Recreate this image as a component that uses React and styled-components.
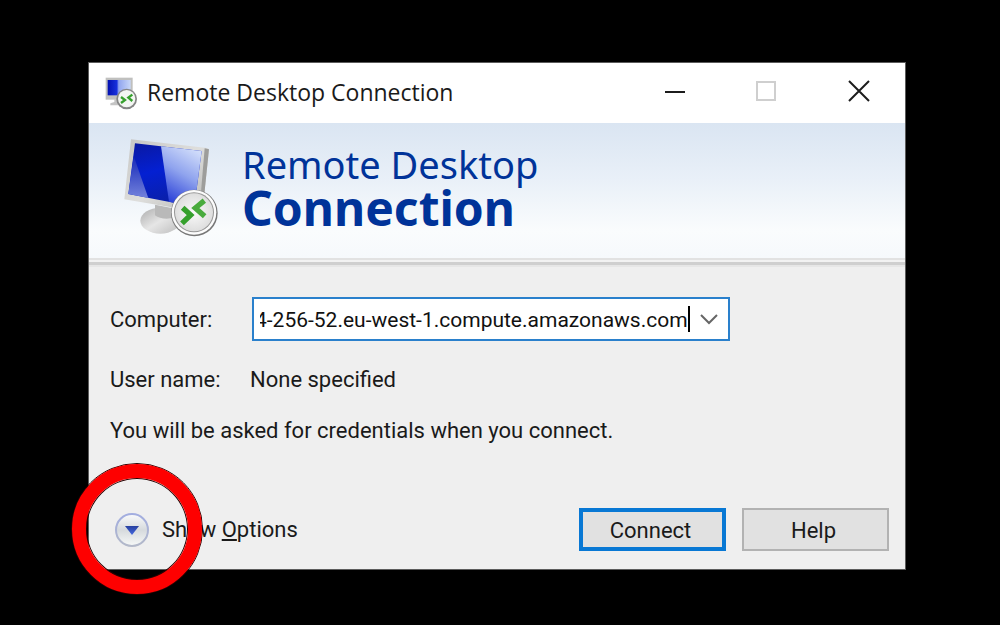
import React, { useLayoutEffect, useRef } from "react";
import styled, { createGlobalStyle } from "styled-components";

const GlobalStyle = createGlobalStyle`
  *, *::before, *::after { box-sizing: border-box; }
  body { margin: 0; background: #000; }
`;

const Desktop = styled.main`
  min-height: 100vh;
  padding: 62px 94px 56px 88px;
  background: #000;
  color: #1a1a1a;
  font-family: Roboto, "Liberation Sans", sans-serif;
  font-size: 22px;
  line-height: 28px;
`;

const Dialog = styled.section`
  border: 1px solid #5c5c5c;
  background: #efefef;
`;

const TitleBar = styled.header`
  display: flex;
  align-items: center;
  height: 60px;
  padding-left: 16px;
  background: #fff;
`;

const Title = styled.h1`
  flex: 1;
  margin: 0 0 0 10px;
  padding-bottom: 2px;
  font: 400 23px/32px "Open Sans", "Noto Sans", sans-serif;
  white-space: nowrap;
`;

const CaptionButton = styled.button`
  display: flex;
  align-items: center;
  justify-content: center;
  width: 92px;
  height: 60px;
  padding: 0 0 4px;
  border: 0;
  background: transparent;
  color: ${(p) => (p.disabled ? "#cfcfcf" : "#1c1c1c")};
`;

const Banner = styled.div`
  display: flex;
  align-items: flex-start;
  height: 135px;
  padding: 15px 34px 0;
  background: linear-gradient(#dae5f2, #e9f0f8 42%, #fafcfd 80%, #f6f9fc);
`;

const BannerText = styled.div`
  margin-left: 23px;
  color: #003399;
  font-family: "Noto Sans", "Open Sans", sans-serif;
  white-space: nowrap;
`;

const Product = styled.div`
  font-size: 38px;
  line-height: 44px;
  padding-top: 4px;
`;

const ProductBold = styled.div`
  font-size: 48px;
  font-weight: 700;
  line-height: 44px;
`;

const Divider = styled.div`
  height: 9px;
  background: linear-gradient(#e2e2e2 0 2px, #f2f2f2 2px 4px, #cfcfcf 4px 7px, #e6e6e6 7px 9px);
`;

const Form = styled.form`
  padding: 30px 16px 18px 21px;
`;

const Row = styled.div`
  display: grid;
  grid-template-columns: 142px minmax(0, 1fr);
  align-items: center;
  margin-bottom: 23px;
`;

const Label = styled.label`
  padding-top: 2px;
`;

const Value = styled.output`
  margin-left: -2px;
  padding-top: 2px;
`;

const ComboBox = styled.div`
  display: flex;
  align-items: center;
  width: 100%;
  max-width: 478px;
  height: 44px;
  padding-left: 6px;
  border: 2px solid #2a80cc;
  background: #fff;
`;

const HostInput = styled.input`
  flex: 1;
  min-width: 0;
  height: 36px;
  padding: 2px 0 0;
  border: 0;
  outline: 0;
  background: transparent;
  color: #111;
  caret-color: transparent;
  font: inherit;
  font-size: 21px;
`;

const Caret = styled.span`
  width: 2px;
  height: 26px;
  background: #000;
`;

const DropButton = styled.button`
  display: flex;
  align-items: center;
  justify-content: center;
  width: 38px;
  height: 40px;
  padding: 0;
  border: 0;
  background: transparent;
`;

const Message = styled.p`
  margin: 0;
`;

const Footer = styled.div`
  display: flex;
  align-items: center;
  gap: 16px;
  margin-top: 63px;
`;

const OptionsArea = styled.div`
  position: relative;
  margin-right: auto;
`;

const OptionsButton = styled.button`
  display: flex;
  align-items: center;
  gap: 12px;
  padding: 0 0 0 4px;
  border: 0;
  background: transparent;
  color: inherit;
  font: inherit;
  white-space: nowrap;
`;

const HighlightRing = styled.div`
  position: absolute;
  top: -49px;
  left: -39px;
  width: 132px;
  height: 132px;
  border: 1px solid #2a0000;
  border-radius: 50%;
  pointer-events: none;

  &::after {
    content: "";
    display: block;
    height: 100%;
    border: 14px solid #fe0000;
    border-radius: 50%;
    box-shadow: inset 0 0 0 1px #2a0000;
  }
`;

const PushButton = styled.button`
  width: 147px;
  height: 43px;
  padding: 2px 4px 0 0;
  border: ${(p) => (p.$primary ? "4px solid #0878d4" : "2px solid #b2b2b2")};
  background: #e1e1e1;
  color: inherit;
  font: inherit;
`;

function MonitorLogo({ width, height }) {
  return (
    <svg width={width} height={height} viewBox="70 38 288 300" aria-hidden="true">
      <defs>
        <linearGradient id="screen" x1="0" y1="0" x2="0.3" y2="1">
          <stop offset="0" stopColor="#0a18a0" />
          <stop offset="0.5" stopColor="#0420d2" />
          <stop offset="1" stopColor="#0a1fa8" />
        </linearGradient>
        <linearGradient id="glare" x1="0.7" y1="0" x2="0.3" y2="1">
          <stop offset="0" stopColor="#d0dcfa" />
          <stop offset="0.45" stopColor="#8fa3ee" />
          <stop offset="1" stopColor="#2238d6" />
        </linearGradient>
        <linearGradient id="shine" x1="0" y1="0" x2="0" y2="1">
          <stop offset="0" stopColor="#1528b8" />
          <stop offset="1" stopColor="#7382dc" />
        </linearGradient>
        <linearGradient id="frame" x1="0" y1="0" x2="1" y2="1">
          <stop offset="0" stopColor="#c6c6c4" />
          <stop offset="0.5" stopColor="#dededc" />
          <stop offset="1" stopColor="#b4b4b2" />
        </linearGradient>
        <linearGradient id="base" x1="0" y1="0" x2="1" y2="1">
          <stop offset="0" stopColor="#ababab" />
          <stop offset="0.5" stopColor="#e6e6e6" />
          <stop offset="1" stopColor="#bcbcbc" />
        </linearGradient>
        <radialGradient id="disc">
          <stop offset="0" stopColor="#fafafa" />
          <stop offset="1" stopColor="#dedede" />
        </radialGradient>
      </defs>
      <ellipse cx="182" cy="286" rx="60" ry="39" fill="url(#base)" />
      <path d="M166 238l62 12-4 26c-20 8-45 4-58-6z" fill="#b9b9b9" />
      <path d="M94 42L322 68l6 4-20 190-14-3L74 222z" fill="url(#frame)" />
      <path d="M315 69l13 3-20 190-9-2z" fill="#9d9d9b" />
      <path d="M106 54L306 77 284 244 86 206z" fill="url(#screen)" />
      <path d="M184 63l122 14-22 167-76-15z" fill="url(#glare)" />
      <path d="M102 92l44 126-60-12z" fill="url(#shine)" />
      <circle cx="284" cy="263" r="70" fill="#777" />
      <circle cx="283" cy="261" r="67" fill="#fcfcfc" />
      <circle cx="283" cy="261" r="60" fill="#969696" />
      <circle cx="283" cy="261" r="57" fill="url(#disc)" />
      <path d="M249 247l24 22-26 25" fill="none" stroke="#35a02c" strokeWidth="16" />
      <path d="M314 226l-27 22 28 25" fill="none" stroke="#49ab3d" strokeWidth="16" />
    </svg>
  );
}

function TitleIcon() {
  return (
    <svg width="32" height="34" viewBox="76 56 96 102" aria-hidden="true">
      <defs>
        <linearGradient id="miniScreen">
          <stop offset="0" stopColor="#0310b0" />
          <stop offset="0.4" stopColor="#1730dc" />
          <stop offset="0.48" stopColor="#91a5ef" />
          <stop offset="1" stopColor="#c8d7f8" />
        </linearGradient>
      </defs>
      <path d="M78 61h81v66H78z" fill="#c0c0be" />
      <path d="M84 68h69v46H84z" fill="url(#miniScreen)" />
      <path d="M104 126h20v10h8v8H92v-6l12-4z" fill="#c4c4c4" />
      <circle cx="141" cy="125" r="31" fill="#858585" />
      <circle cx="141" cy="124" r="26" fill="#f3f6f2" />
      <path d="M124 119l12 9-12 9M158 112l-12 9 12 10" fill="none" stroke="#36a02d" strokeWidth="7" />
    </svg>
  );
}

function ExpandIcon() {
  return (
    <svg width="36" height="36" viewBox="0 0 36 36" aria-hidden="true">
      <defs>
        <linearGradient id="expandFill" x1="0" y1="0" x2="0" y2="1">
          <stop offset="0" stopColor="#fafbfc" />
          <stop offset="0.5" stopColor="#d6dadd" />
          <stop offset="1" stopColor="#f7f9f8" />
        </linearGradient>
        <linearGradient id="expandEdge" x1="0" y1="0" x2="0" y2="1">
          <stop offset="0" stopColor="#a2ade0" />
          <stop offset="1" stopColor="#b3b9c9" />
        </linearGradient>
        <linearGradient id="expandArrow" x1="0" y1="0" x2="0" y2="1">
          <stop offset="0" stopColor="#27409f" />
          <stop offset="1" stopColor="#4468e0" />
        </linearGradient>
      </defs>
      <circle cx="18" cy="18" r="16" fill="url(#expandFill)" stroke="url(#expandEdge)" strokeWidth="2" />
      <path d="M11 14h14l-7 9z" fill="url(#expandArrow)" />
    </svg>
  );
}

export default function App() {
  const host = useRef(null);

  // Keep the end of a long host name in view.
  useLayoutEffect(() => {
    const showEnd = () => {
      if (host.current) host.current.scrollLeft = host.current.scrollWidth;
    };
    showEnd();
    document.fonts.ready.then(showEnd);
    window.addEventListener("resize", showEnd);
    return () => window.removeEventListener("resize", showEnd);
  }, []);

  return (
    <Desktop>
      <GlobalStyle />
      <Dialog aria-label="Remote Desktop Connection">
        <TitleBar>
          <TitleIcon />
          <Title>Remote Desktop Connection</Title>
          <CaptionButton aria-label="Minimize">
            <svg width="22" height="22" viewBox="0 0 22 22">
              <path d="M1 12h20" stroke="currentColor" strokeWidth="2" />
            </svg>
          </CaptionButton>
          <CaptionButton aria-label="Maximize" disabled>
            <svg width="22" height="22" viewBox="0 0 22 22">
              <path d="M1 2h18v18H1z" fill="none" stroke="currentColor" strokeWidth="2" />
            </svg>
          </CaptionButton>
          <CaptionButton aria-label="Close">
            <svg width="22" height="22" viewBox="0 0 22 22">
              <path d="M1 1l20 20M21 1L1 21" stroke="currentColor" strokeWidth="2" />
            </svg>
          </CaptionButton>
        </TitleBar>
        <Banner>
          <MonitorLogo width="96" height="100" />
          <BannerText>
            <Product>Remote Desktop</Product>
            <ProductBold>Connection</ProductBold>
          </BannerText>
        </Banner>
        <Divider />
        <Form onSubmit={(e) => e.preventDefault()}>
          <Row>
            <Label htmlFor="computer">Computer:</Label>
            <ComboBox>
              <HostInput
                id="computer"
                ref={host}
                defaultValue="4-256-52.eu-west-1.compute.amazonaws.com"
                spellCheck={false}
              />
              <Caret />
              <DropButton type="button" aria-label="Recent computers">
                <svg width="20" height="12" viewBox="0 0 20 12">
                  <path d="M2 2l8 8 8-8" fill="none" stroke="#666" strokeWidth="2" />
                </svg>
              </DropButton>
            </ComboBox>
          </Row>
          <Row>
            <Label htmlFor="user">User name:</Label>
            <Value id="user">None specified</Value>
          </Row>
          <Message>You will be asked for credentials when you connect.</Message>
          <Footer>
            <OptionsArea>
              <OptionsButton type="button">
                <ExpandIcon />
                <span>
                  Show <u>O</u>ptions
                </span>
              </OptionsButton>
              <HighlightRing />
            </OptionsArea>
            <PushButton type="submit" $primary>Connect</PushButton>
            <PushButton type="button">Help</PushButton>
          </Footer>
        </Form>
      </Dialog>
    </Desktop>
  );
}
